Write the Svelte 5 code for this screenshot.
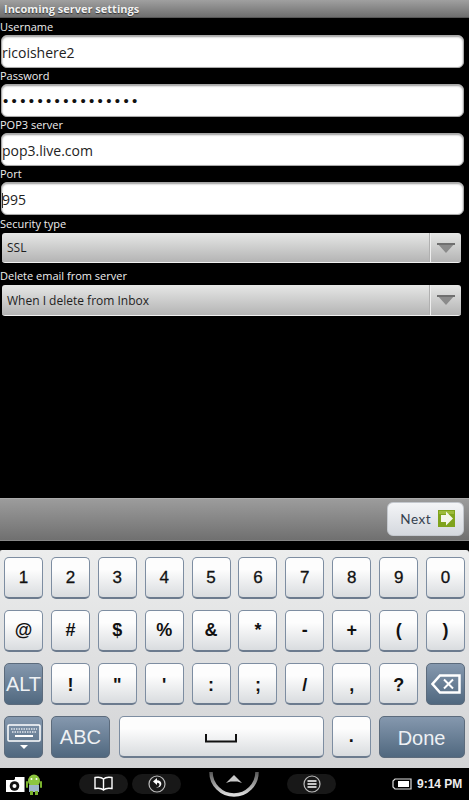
<script>
	const numbers = ['1', '2', '3', '4', '5', '6', '7', '8', '9', '0'];
	const symbols = ['@', '#', '$', '%', '&', '*', '-', '+', '(', ')'];
	const punct = ['!', '"', "'", ':', ';', '/', ',', '?'];
</script>

<div class="screen">
	<div class="title">Incoming server settings</div>

	<div class="form">
		<div class="label">Username</div>
		<div class="input">ricoishere2</div>
		<div class="label">Password</div>
		<div class="input dots">••••••••••••••••</div>
		<div class="label">POP3 server</div>
		<div class="input">pop3.live.com</div>
		<div class="label">Port</div>
		<div class="input"><span class="caret"></span>995</div>
		<div class="label sec">Security type</div>
		<div class="select first">
			<span class="value">SSL</span>
			<span class="arrow"><svg width="18" height="10" viewBox="0 0 18 10"><path d="M0 0h18l-9 10z" fill="#8b8b8b" /><path d="M0 0h18v2H0z" fill="#6f6f6f" /></svg></span>
		</div>
		<div class="label gap">Delete email from server</div>
		<div class="select second">
			<span class="value">When I delete from Inbox</span>
			<span class="arrow"><svg width="18" height="10" viewBox="0 0 18 10"><path d="M0 0h18l-9 10z" fill="#8b8b8b" /><path d="M0 0h18v2H0z" fill="#6f6f6f" /></svg></span>
		</div>
	</div>

	<div class="spacer"></div>

	<div class="nextbar">
		<button class="next">
			<span>Next</span>
			<svg width="17" height="17" viewBox="0 0 17 17">
				<rect width="17" height="17" fill="#7fa31c" />
				<rect x="1" y="1" width="15" height="3" fill="#9dbb3a" />
				<path d="M3 5h5V1.500l7 7-7 7V12H3z" fill="#f4f6ea" />
			</svg>
		</button>
	</div>

	<div class="keyboard">
		<div class="row">
			{#each numbers as k}
				<button class="key">{k}</button>
			{/each}
		</div>
		<div class="row">
			{#each symbols as k}
				<button class="key">{k}</button>
			{/each}
		</div>
		<div class="row">
			<button class="key dark alt">ALT</button>
			{#each punct as k}
				<button class="key nudge">{k}</button>
			{/each}
			<button class="key dark" aria-label="Backspace">
				<svg width="30" height="20" viewBox="0 0 30 20">
					<path d="M9 1.500h19.500v17H9L1.500 10z" fill="none" stroke="#fff" stroke-width="2.500" />
					<path d="M13 5.500l9 9M22 5.500l-9 9" stroke="#fff" stroke-width="2" />
				</svg>
			</button>
		</div>
		<div class="row">
			<button class="key dark" aria-label="Hide keyboard">
				<svg width="34" height="26" viewBox="0 0 34 26">
					<rect x="1" y="1" width="32" height="16" rx="1" fill="none" stroke="#fff" stroke-width="1.500" />
					<path d="M4 5h26M5 8h24" stroke="#dfe5ec" stroke-width="1.500" stroke-dasharray="1.500 1" />
					<path d="M8 12h18" stroke="#fff" stroke-width="2" />
					<path d="M13 21h8l-4 4z" fill="#fff" />
				</svg>
			</button>
			<button class="key dark abc">ABC</button>
			<button class="key space" aria-label="Space">
				<svg width="32" height="9" viewBox="0 0 32 9"><path d="M1 0v7.500h30V0" fill="none" stroke="#111" stroke-width="2" /></svg>
			</button>
			<button class="key">.</button>
			<button class="key dark done">Done</button>
		</div>
	</div>

	<div class="taskbar">
		<svg class="camera" width="20" height="17" viewBox="0 0 20 17">
			<path d="M1 4h8l1-1V1h9.500v15H1z" fill="#fff" />
			<circle cx="9.500" cy="10" r="4.800" fill="#111" />
			<circle cx="9.500" cy="10" r="2" fill="#fff" />
		</svg>
		<svg class="droid" width="16" height="21" viewBox="0 0 16 21">
			<ellipse cx="8" cy="7" rx="6" ry="6.500" fill="#8cc63f" />
			<rect x="0" y="7" width="2" height="7" rx="1" fill="#7ab32e" />
			<rect x="14" y="7" width="2" height="7" rx="1" fill="#7ab32e" />
			<rect x="3" y="11" width="10" height="7" fill="#9fb7c9" />
			<rect x="4" y="17" width="3" height="4" fill="#7ab32e" />
			<rect x="9" y="17" width="3" height="4" fill="#7ab32e" />
			<circle cx="5.500" cy="5" r="1" fill="#fff" />
			<circle cx="10.500" cy="5" r="1" fill="#fff" />
		</svg>
		<div class="pill book">
			<svg width="19" height="16" viewBox="0 0 19 16">
				<path d="M9.500 3C8 1.500 4 1 1 1.500v11c3-.5 7 0 8.500 1.500 1.500-1.500 5.500-2 8.500-1.500v-11C15 1 11 1.500 9.500 3zM9.500 3v11" fill="none" stroke="#fff" stroke-width="1.400" />
			</svg>
		</div>
		<div class="pill back">
			<svg width="18" height="18" viewBox="0 0 18 18">
				<circle cx="9" cy="9" r="8" fill="none" stroke="#bbb" stroke-width="1.200" />
				<path d="M9 3L5 6.500 9 10V7.800c2 0 2.800 1 2.400 2.400-.3 1-1.300 2-3.400 2.400 3 .4 5-1.200 5.300-3.300C13.600 7 12 5.300 9 5.300z" fill="#fff" />
			</svg>
		</div>
		<svg class="home" width="50" height="25" viewBox="0 0 50 25">
			<defs>
				<linearGradient id="ring" x1="0" y1="0" x2="0" y2="1">
					<stop offset="0" stop-color="#555" />
					<stop offset="1" stop-color="#ddd" />
				</linearGradient>
			</defs>
			<path d="M2 0a23 23 0 0 0 46 0" fill="none" stroke="url(#ring)" stroke-width="3.500" />
			<path d="M25 3l8 8-4.500-1.500h-7L17 11z" fill="#c8c8c8" />
		</svg>
		<div class="pill menu">
			<svg width="18" height="18" viewBox="0 0 18 18">
				<circle cx="9" cy="9" r="8" fill="none" stroke="#bbb" stroke-width="1.200" />
				<path d="M4.500 6h9M4.500 9h9M4.500 12h9" stroke="#fff" stroke-width="1.600" />
			</svg>
		</div>
		<svg class="battery" width="20" height="12" viewBox="0 0 20 12">
			<path d="M3 1h16v10H3L1 9V3z" fill="none" stroke="#ddd" stroke-width="1.200" />
			<rect x="6" y="3" width="11" height="6" fill="#fff" />
		</svg>
		<span class="time">9:14 PM</span>
	</div>
</div>

<style>
	:global(body) {
		background: #000;
	}

	.screen {
		width: 469px;
		height: 800px;
		display: flex;
		flex-direction: column;
		overflow: hidden;
		background: #000;
		font-family: 'Open Sans', 'Noto Sans', sans-serif;
	}

	.title {
		height: 18px;
		line-height: 18px;
		padding-left: 4px;
		flex-shrink: 0;
		box-sizing: border-box;
		background: linear-gradient(#a0a0a0, #6e6e6e);
		border-bottom: 1px solid #555;
		color: #f2f2f2;
		font-size: 11px;
		font-weight: 700;
		text-shadow: 0 1px 1px #333;
	}

	.form {
		display: flex;
		flex-direction: column;
		padding-top: 1px;
	}

	.label {
		height: 16px;
		line-height: 16px;
		color: #eee;
		font-size: 11px;
	}

	.label.sec {
		margin-top: 1px;
	}

	.label.gap {
		margin-top: 5px;
	}

	.input {
		margin-left: 1px;
		width: 463px;
		height: 33px;
		box-sizing: border-box;
		background: #fff;
		border: 1px solid #a8a8a8;
		border-radius: 6px;
		box-shadow: inset 0 1px 2px #999;
		color: #222;
		font-size: 14px;
		line-height: 33px;
		white-space: nowrap;
		position: relative;
	}

	.dots {
		font-family: 'Liberation Sans', sans-serif;
		font-size: 15px;
		line-height: 31px;
		letter-spacing: 3.350px;
		padding-left: 1px;
		color: #111;
	}

	.caret {
		display: inline-block;
		width: 1px;
		height: 15px;
		background: #333;
		vertical-align: -3px;
		margin-right: -1px;
	}

	.select {
		margin-left: 2px;
		width: 459px;
		height: 31px;
		box-sizing: border-box;
		display: flex;
		align-items: center;
		background: linear-gradient(#e6e7e6, #b4b4b4);
		border-bottom: 1px solid #f0f0f0;
		border-radius: 3px;
		color: #1e1e1e;
		font-size: 12px;
	}

	.select.first {
		height: 30px;
		margin-top: 1px;
	}

	.select.second {
		margin-top: 1px;
	}

	.value {
		flex: 1;
		padding-left: 5px;
	}

	.arrow {
		width: 31px;
		height: 100%;
		box-sizing: border-box;
		display: flex;
		align-items: center;
		justify-content: center;
		border-left: 1px solid #eee;
		box-shadow: -1px 0 0 #b0b0b0;
	}

	.spacer {
		flex: 1;
	}

	.nextbar {
		height: 43px;
		flex-shrink: 0;
		box-sizing: border-box;
		display: flex;
		justify-content: flex-end;
		align-items: center;
		padding: 0 5px 2px 0;
		background: linear-gradient(#9c9c9c, #707070);
		border-top: 1px solid #aaa;
		border-bottom: 1px solid #888;
	}

	.next {
		width: 77px;
		height: 34px;
		display: flex;
		align-items: center;
		justify-content: flex-end;
		gap: 7px;
		padding: 0 8px 0 0;
		background: linear-gradient(#f4f5f7, #d4d8de);
		border: 1px solid #c4c8ce;
		border-radius: 6px;
		color: #34404e;
		font-family: 'Lato', sans-serif;
		font-size: 13.500px;
		letter-spacing: 0.500px;
	}

	.keyboard {
		height: 218px;
		margin-top: 9px;
		flex-shrink: 0;
		box-sizing: border-box;
		display: flex;
		flex-direction: column;
		gap: 11px;
		padding: 7px 0 0 4px;
		background: linear-gradient(#eceded, #d2d3d5);
		border-left: 1px solid #999;
		border-radius: 3px 3px 0 0;
		margin-left: -1px;
	}

	.row {
		display: flex;
		gap: 7.900px;
		height: 42px;
	}

	.key {
		width: 39px;
		height: 42px;
		flex-shrink: 0;
		padding: 0;
		display: flex;
		align-items: center;
		justify-content: center;
		background: linear-gradient(#fdfdfd 30%, #d9dcdf);
		border: 1px solid #7d8da1;
		border-bottom: 2px solid #6c7b8e;
		border-radius: 5px;
		color: #111;
		font-family: 'Liberation Sans', sans-serif;
		font-size: 18px;
		font-weight: 700;
	}

	.row:first-child .key {
		font-size: 17px;
		font-weight: 400;
		-webkit-text-stroke: 0.300px #111;
	}

	.nudge {
		padding-top: 3px;
	}

	.dark {
		background: linear-gradient(#8598ae, #50687f);
		border: 1px solid #5c6b7c;
		color: #eef1f4;
		font-weight: 400;
		font-size: 20px;
	}

	.abc {
		width: 59px;
		margin-right: 1px;
	}

	.space {
		width: 205px;
	}

	.space svg {
		margin-top: 3px;
	}

	.done {
		width: 86px;
		padding-top: 2px;
	}

	.taskbar {
		height: 32px;
		flex-shrink: 0;
		display: flex;
		align-items: center;
		background: #000;
		color: #eee;
		box-sizing: border-box;
	}

	.camera {
		margin-left: 5px;
	}

	.droid {
		margin-left: 1px;
	}

	.pill {
		width: 49px;
		height: 20px;
		display: flex;
		align-items: center;
		justify-content: center;
		background: #181818;
		border-radius: 10px;
	}

	.book {
		margin-left: 37px;
	}

	.back {
		margin-left: 4px;
	}

	.home {
		margin-left: 28px;
		align-self: flex-end;
		margin-bottom: 3px;
	}

	.menu {
		margin-left: 28px;
	}

	.battery {
		margin-left: 56px;
	}

	.time {
		margin-left: 5px;
		font-family: 'Liberation Sans', sans-serif;
		font-size: 12px;
		font-weight: 700;
		white-space: nowrap;
	}
</style>
